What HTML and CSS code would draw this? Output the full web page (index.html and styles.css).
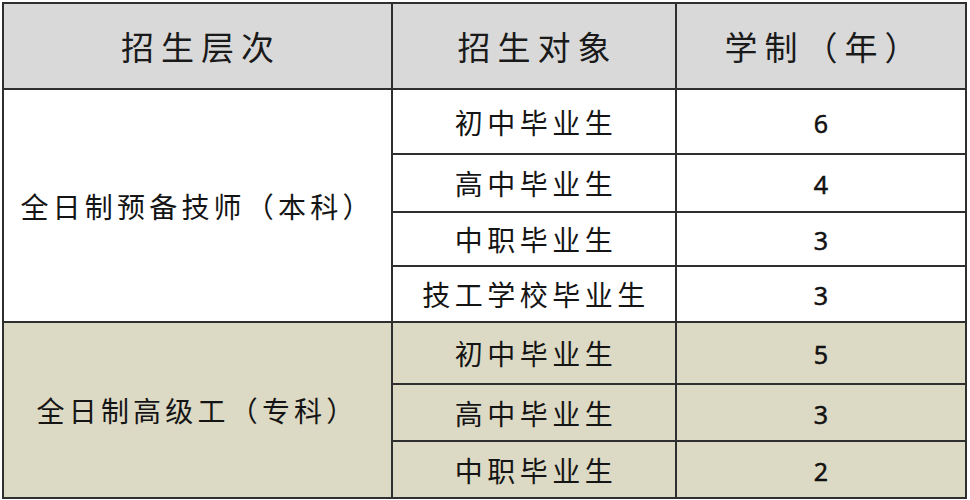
FILE: index.html
```html
<!DOCTYPE html>
<html lang="zh-CN">
<head>
<meta charset="utf-8">
<title>招生层次</title>
<link rel="stylesheet" href="styles.css">
</head>
<body>
<div class="page">
  <div class="table">
    <div class="cell head">招生层次</div>
    <div class="cell head">招生对象</div>
    <div class="cell head">学制（年）</div>

    <div class="cell level level-a">全日制预备技师（本科）</div>
    <div class="cell target">初中毕业生</div>
    <div class="cell num">6</div>
    <div class="cell target">高中毕业生</div>
    <div class="cell num">4</div>
    <div class="cell target">中职毕业生</div>
    <div class="cell num">3</div>
    <div class="cell target">技工学校毕业生</div>
    <div class="cell num">3</div>

    <div class="cell level level-b tan">全日制高级工（专科）</div>
    <div class="cell target tan">初中毕业生</div>
    <div class="cell num tan">5</div>
    <div class="cell target tan">高中毕业生</div>
    <div class="cell num tan">3</div>
    <div class="cell target tan">中职毕业生</div>
    <div class="cell num tan">2</div>
  </div>
</div>
</body>
</html>
```

FILE: styles.css
```css
html, body {
  margin: 0;
  padding: 0;
  background: #ffffff;
}

.page {
  padding: 2px 0 0 2px;
}

.table {
  display: grid;
  grid-template-columns: 389px 284px 290px;
  grid-template-rows: 86px 65px 58px 54px 56px 62px 57px 57px;
  width: 965px;
  box-sizing: border-box;
  border-left: 2px solid #2f2f2f;
  border-top: 2px solid #2f2f2f;
  font-family: "Noto Sans CJK SC", "Noto Sans", sans-serif;
  color: #151515;
}

.cell {
  display: flex;
  align-items: center;
  justify-content: center;
  box-sizing: border-box;
  border-right: 2px solid #2f2f2f;
  border-bottom: 2px solid #2f2f2f;
  background: #ffffff;
  white-space: nowrap;
}

.head {
  background: #d9d9d9;
  font-size: 33px;
  letter-spacing: 7px;
  padding-left: 7px;
  color: #1a1a1a;
}

.target {
  font-size: 28px;
  letter-spacing: 4.5px;
  padding-left: 4px;
}

.level {
  font-size: 28px;
  letter-spacing: 4.2px;
  padding-right: 0;
}

.level-a {
  grid-column: 1;
  grid-row: 2 / 6;
}

.level-b {
  grid-column: 1;
  grid-row: 6 / 9;
}

.num {
  font-family: "Open Sans", "Liberation Sans", sans-serif;
  font-size: 25px;
  font-weight: 400;
  -webkit-text-stroke: 0.6px #111111;
  color: #111111;
  padding-top: 2px;
}

.tan {
  background: #dcd9c4;
}
```
